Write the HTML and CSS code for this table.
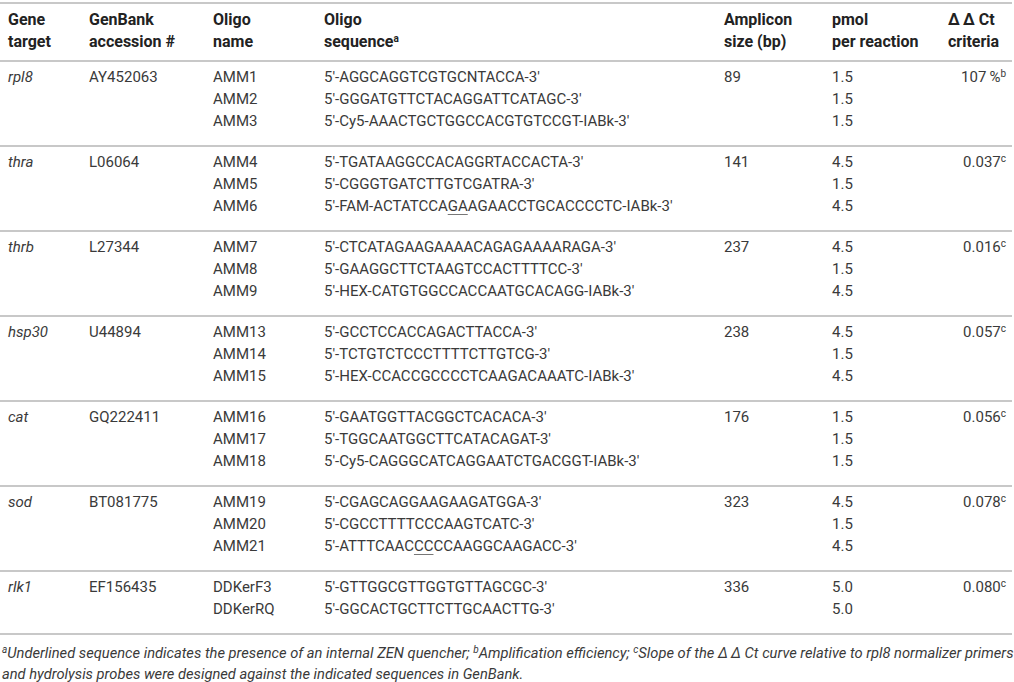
FILE: index.html
```html
<!DOCTYPE html>
<html>
<head>
<meta charset="utf-8">
<link rel="stylesheet" href="styles.css">
</head>
<body>
<table class="tbl">
  <colgroup>
    <col class="c1"><col class="c2"><col class="c3"><col class="c4"><col class="c5"><col class="c6"><col class="c7">
  </colgroup>
  <thead>
    <tr>
      <th>Gene<br>target</th>
      <th>GenBank<br>accession #</th>
      <th>Oligo<br>name</th>
      <th>Oligo<br>sequence<sup>a</sup></th>
      <th>Amplicon<br>size (bp)</th>
      <th>pmol<br>per reaction</th>
      <th>Δ&#8201;Δ Ct<br>criteria</th>
    </tr>
  </thead>
  <tbody>
    <tr><td class="gene">rpl8</td><td>AY452063</td><td>AMM1</td><td>5′-AGGCAGGTCGTGCNTACCA-3′</td><td>89</td><td>1.5</td><td class="crit">107&#8201;%<sup>b</sup></td></tr>
    <tr><td></td><td></td><td>AMM2</td><td>5′-GGGATGTTCTACAGGATTCATAGC-3′</td><td></td><td>1.5</td><td></td></tr>
    <tr><td></td><td></td><td>AMM3</td><td>5′-Cy5-AAACTGCTGGCCACGTGTCCGT-IABk-3′</td><td></td><td>1.5</td><td></td></tr>
  </tbody>
  <tbody>
    <tr><td class="gene">thra</td><td>L06064</td><td>AMM4</td><td>5′-TGATAAGGCCACAGGRTACCACTA-3′</td><td>141</td><td>4.5</td><td class="crit">0.037<sup>c</sup></td></tr>
    <tr><td></td><td></td><td>AMM5</td><td>5′-CGGGTGATCTTGTCGATRA-3′</td><td></td><td>1.5</td><td></td></tr>
    <tr><td></td><td></td><td>AMM6</td><td>5′-FAM-ACTATCCA<span class="ul">GA</span>AGAACCTGCACCCCTC-IABk-3′</td><td></td><td>4.5</td><td></td></tr>
  </tbody>
  <tbody>
    <tr><td class="gene">thrb</td><td>L27344</td><td>AMM7</td><td>5′-CTCATAGAAGAAAACAGAGAAAARAGA-3′</td><td>237</td><td>4.5</td><td class="crit">0.016<sup>c</sup></td></tr>
    <tr><td></td><td></td><td>AMM8</td><td>5′-GAAGGCTTCTAAGTCCACTTTTCC-3′</td><td></td><td>1.5</td><td></td></tr>
    <tr><td></td><td></td><td>AMM9</td><td>5′-HEX-CATGTGGCCACCAATGCACAGG-IABk-3′</td><td></td><td>4.5</td><td></td></tr>
  </tbody>
  <tbody>
    <tr><td class="gene">hsp30</td><td>U44894</td><td>AMM13</td><td>5′-GCCTCCACCAGACTTACCA-3′</td><td>238</td><td>4.5</td><td class="crit">0.057<sup>c</sup></td></tr>
    <tr><td></td><td></td><td>AMM14</td><td>5′-TCTGTCTCCCTTTTCTTGTCG-3′</td><td></td><td>1.5</td><td></td></tr>
    <tr><td></td><td></td><td>AMM15</td><td>5′-HEX-CCACCGCCCCTCAAGACAAATC-IABk-3′</td><td></td><td>4.5</td><td></td></tr>
  </tbody>
  <tbody>
    <tr><td class="gene">cat</td><td>GQ222411</td><td>AMM16</td><td>5′-GAATGGTTACGGCTCACACA-3′</td><td>176</td><td>1.5</td><td class="crit">0.056<sup>c</sup></td></tr>
    <tr><td></td><td></td><td>AMM17</td><td>5′-TGGCAATGGCTTCATACAGAT-3′</td><td></td><td>1.5</td><td></td></tr>
    <tr><td></td><td></td><td>AMM18</td><td>5′-Cy5-CAGGGCATCAGGAATCTGACGGT-IABk-3′</td><td></td><td>1.5</td><td></td></tr>
  </tbody>
  <tbody>
    <tr><td class="gene">sod</td><td>BT081775</td><td>AMM19</td><td>5′-CGAGCAGGAAGAAGATGGA-3′</td><td>323</td><td>4.5</td><td class="crit">0.078<sup>c</sup></td></tr>
    <tr><td></td><td></td><td>AMM20</td><td>5′-CGCCTTTTCCCAAGTCATC-3′</td><td></td><td>1.5</td><td></td></tr>
    <tr><td></td><td></td><td>AMM21</td><td>5′-ATTTCAAC<span class="ul">CC</span>CCAAGGCAAGACC-3′</td><td></td><td>4.5</td><td></td></tr>
  </tbody>
  <tbody class="last">
    <tr><td class="gene">rlk1</td><td>EF156435</td><td>DDKerF3</td><td>5′-GTTGGCGTTGGTGTTAGCGC-3′</td><td>336</td><td>5.0</td><td class="crit">0.080<sup>c</sup></td></tr>
    <tr><td></td><td></td><td>DDKerRQ</td><td>5′-GGCACTGCTTCTTGCAACTTG-3′</td><td></td><td>5.0</td><td></td></tr>
  </tbody>
</table>
<p class="note"><sup>a</sup>Underlined sequence indicates the presence of an internal ZEN quencher; <sup>b</sup>Amplification efficiency; <sup>c</sup>Slope of the Δ&#8201;Δ Ct curve relative to rpl8 normalizer primers<br>and hydrolysis probes were designed against the indicated sequences in GenBank.</p>
</body>
</html>
```
FILE: styles.css
```css
html, body {
  margin: 0;
  padding: 0;
  background: #ffffff;
}
body {
  font-family: Roboto, "Liberation Sans", Arial, sans-serif;
  color: #3a3a3a;
  padding-top: 2px;
}
.tbl {
  width: 1012px;
  border-collapse: collapse;
  table-layout: fixed;
  font-size: 15px;
}
.c1 { width: 81px; }
.c2 { width: 124px; }
.c3 { width: 111px; }
.c4 { width: 400px; }
.c5 { width: 108px; }
.c6 { width: 116px; }
.c7 { width: 72px; }
.tbl thead tr {
  border-top: 2px solid #c8c8c8;
  border-bottom: 2px solid #c8c8c8;
}
.tbl th {
  text-align: left;
  font-weight: bold;
  font-size: 16px;
  color: #222222;
  line-height: 22px;
  padding: 5px 0 7px 8px;
  vertical-align: top;
  white-space: nowrap;
}
.tbl tbody {
  border-top: 2px solid #c8c8c8;
}
.tbl tbody.last {
  border-bottom: 2px solid #c8c8c8;
}
.tbl td {
  line-height: 22px;
  padding: 0 0 0 8px;
  white-space: nowrap;
  vertical-align: top;
}
.tbl tbody tr:first-child td {
  padding-top: 4px;
}
.tbl tbody tr:last-child td {
  padding-bottom: 13px;
}
.tbl td.crit {
  text-align: right;
  padding-right: 6px;
}
.gene {
  font-style: italic;
}
sup {
  font-size: 10px;
  line-height: 0;
  vertical-align: 5px;
}
.ul {
  text-decoration: underline;
  text-decoration-color: #777777;
  text-underline-offset: 3px;
}
.note {
  margin: 8px 0 0 2px;
  font-size: 14.7px;
  line-height: 21px;
  font-style: italic;
  white-space: nowrap;
  color: #3a3a3a;
}
.note sup {
  font-size: 10px;
  vertical-align: 5px;
}
```
